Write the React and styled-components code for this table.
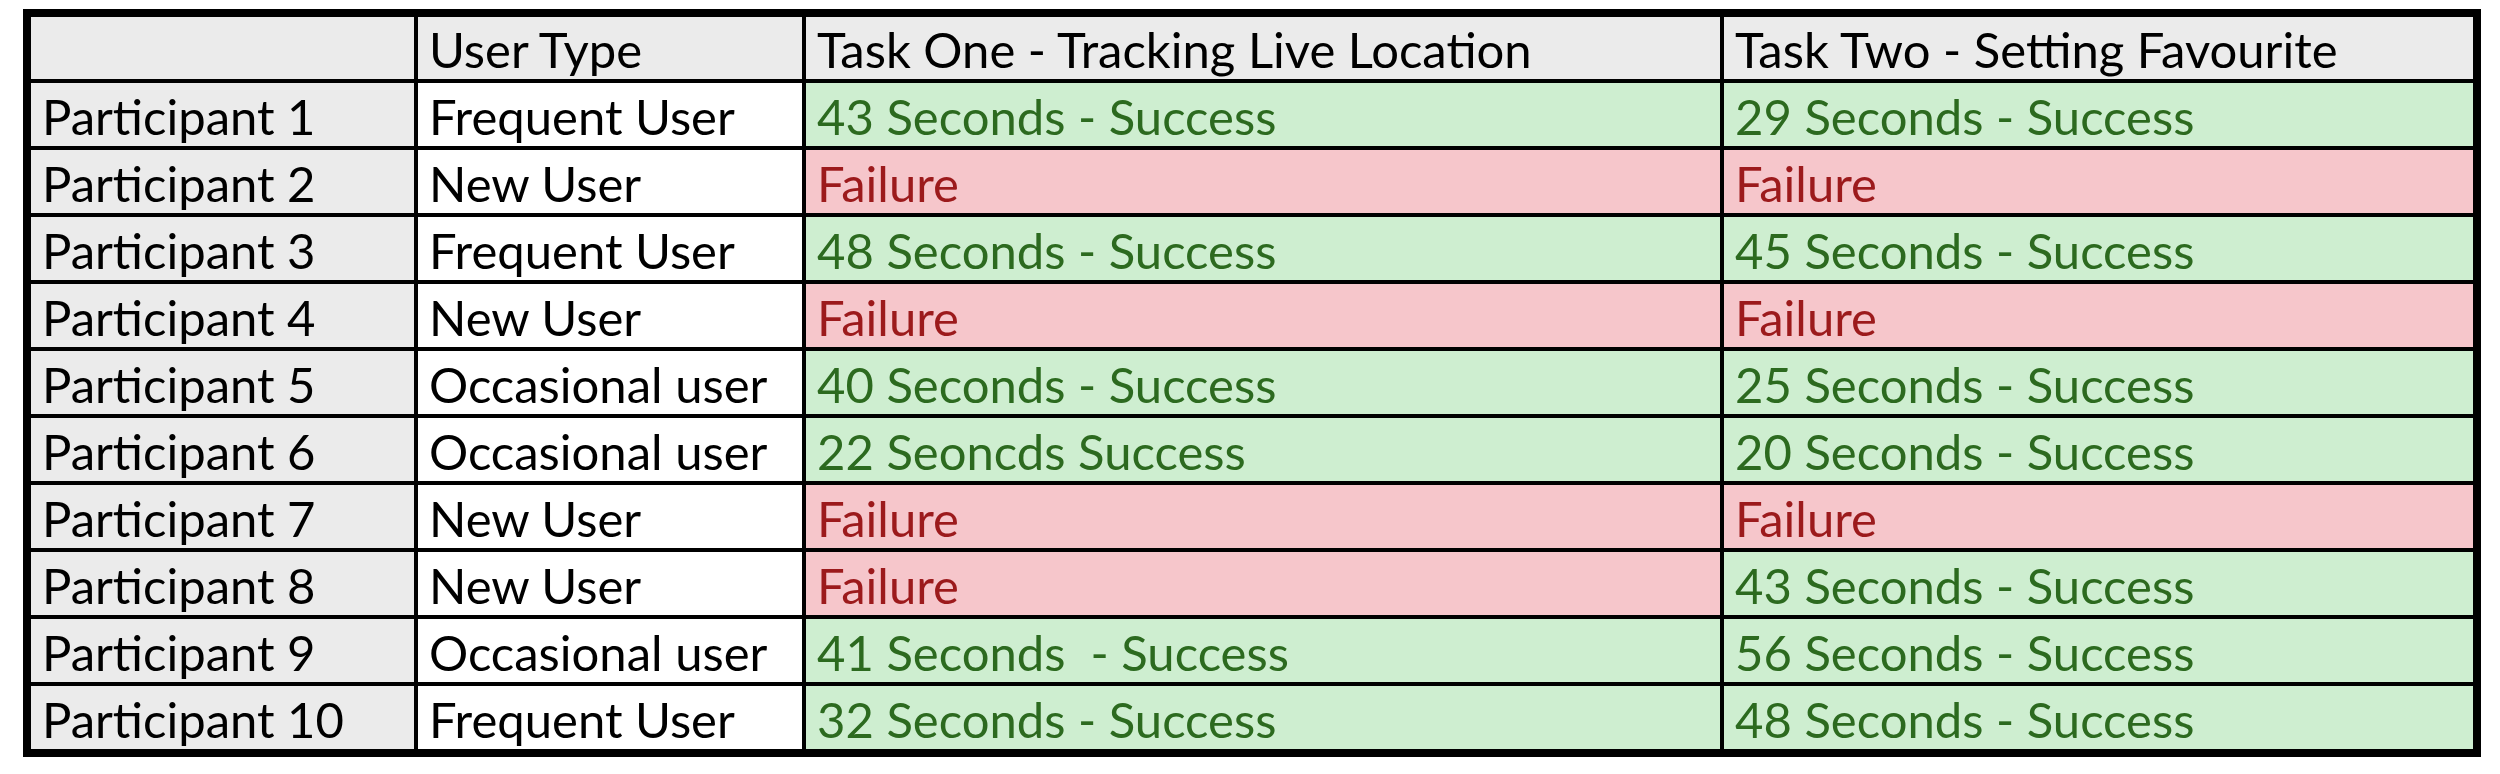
import styled, { createGlobalStyle } from 'styled-components';

const GlobalStyle = createGlobalStyle`
    html, body {
        margin: 0;
        padding: 0;
        background: #ffffff;
    }
`;

const rows = [
    ['Participant 1', 'Frequent User', '43 Seconds - Success', '29 Seconds - Success'],
    ['Participant 2', 'New User', 'Failure', 'Failure'],
    ['Participant 3', 'Frequent User', '48 Seconds - Success', '45 Seconds - Success'],
    ['Participant 4', 'New User', 'Failure', 'Failure'],
    ['Participant 5', 'Occasional user', '40 Seconds - Success', '25 Seconds - Success'],
    ['Participant 6', 'Occasional user', '22 Seoncds Success', '20 Seconds - Success'],
    ['Participant 7', 'New User', 'Failure', 'Failure'],
    ['Participant 8', 'New User', 'Failure', '43 Seconds - Success'],
    ['Participant 9', 'Occasional user', '41 Seconds  - Success', '56 Seconds - Success'],
    ['Participant 10', 'Frequent User', '32 Seconds - Success', '48 Seconds - Success'],
];

const tones = {
    head: { bg: '#ebebeb', fg: '#000000' },
    label: { bg: '#ebebeb', fg: '#000000' },
    plain: { bg: '#ffffff', fg: '#000000' },
    pass: { bg: '#ceeed0', fg: '#2c6a1f' },
    fail: { bg: '#f6c6cb', fg: '#9c1a1c' },
};

function toneOf(text) {
    return text === 'Failure' ? 'fail' : 'pass';
}

export default function App() {
    return (
        <Page>
            <GlobalStyle />
            <Table>
                <Cell $tone="head"></Cell>
                <Cell $tone="head">User Type</Cell>
                <Cell $tone="head">Task One - Tracking Live Location</Cell>
                <Cell $tone="head">Task Two - Setting Favourite</Cell>
                {rows.map(row => (
                    <Row key={row[0]}>
                        <Cell $tone="label">{row[0]}</Cell>
                        <Cell $tone="plain">{row[1]}</Cell>
                        <Cell $tone={toneOf(row[2])}>{row[2]}</Cell>
                        <Cell $tone={toneOf(row[3])}>{row[3]}</Cell>
                    </Row>
                ))}
            </Table>
        </Page>
    );
}

const Page = styled.main`
    padding: 9px 0 0 23px;
`;

const Table = styled.section`
    width: max-content;
    display: grid;
    grid-template-columns: 383px 384px 914px 749px;
    grid-template-rows: 62px repeat(10, 63px);
    gap: 4px;
    padding: 8px;
    background: #000000;
`;

const Row = styled.div`
    display: contents;
`;

const Cell = styled.div`
    display: flex;
    align-items: center;
    padding: 3px 0 0 11px;
    white-space: pre;
    font-family: Lato, "Open Sans", sans-serif;
    font-size: 49px;
    line-height: 1;
    background: ${p => tones[p.$tone].bg};
    color: ${p => tones[p.$tone].fg};
`;
